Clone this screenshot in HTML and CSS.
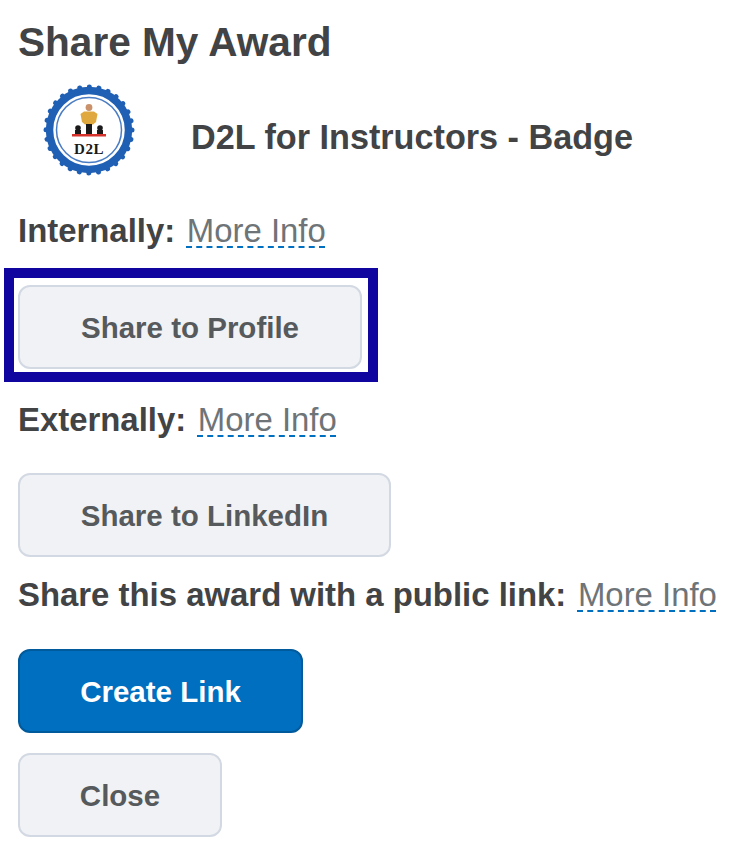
FILE: index.html
```html
<!DOCTYPE html>
<html lang="en">
<head>
<meta charset="utf-8">
<title>Share My Award</title>
<link rel="stylesheet" href="styles.css">
</head>
<body>
<main class="page">
  <h1 class="title">Share My Award</h1>
  <div class="award">
    <svg class="badge" viewBox="0 0 96 96" width="96" height="96" aria-hidden="true">
      <circle cx="48" cy="48" r="43" fill="none" stroke="#1f5fb4" stroke-width="5" stroke-linecap="round" stroke-dasharray="0.01 9.640"/>
      <circle cx="48" cy="48" r="39.500" fill="none" stroke="#1f5fb4" stroke-width="7.500"/>
      <circle cx="48" cy="48" r="32.500" fill="none" stroke="#4a7cc4" stroke-width="1.500"/>
      <circle cx="48" cy="25.500" r="3.400" fill="#c9926a"/>
      <path d="M43 29.500h10l3.500 2.500-1.500 8-3 2.500h-8l-3-2.500-1.500-8z" fill="#e0a93f"/>
      <rect x="45" y="42" width="6" height="10.500" fill="#1a1a1a"/>
      <circle cx="37" cy="46" r="2.800" fill="#1a1a1a"/>
      <circle cx="59" cy="46" r="2.800" fill="#1a1a1a"/>
      <rect x="34" y="48" width="6" height="4.500" fill="#1a1a1a"/>
      <rect x="56" y="48" width="6" height="4.500" fill="#1a1a1a"/>
      <rect x="31" y="52" width="34" height="2.500" fill="#d6322c"/>
      <text x="48" y="72" class="badge-text" text-anchor="middle">D2L</text>
    </svg>
    <h2 class="award-name">D2L for Instructors - Badge</h2>
  </div>

  <p class="label"><strong>Internally:</strong> <a class="info" href="#">More Info</a></p>
  <div class="highlight">
    <button class="btn btn-wide" type="button">Share to Profile</button>
  </div>

  <p class="label label-ext"><strong>Externally:</strong> <a class="info" href="#">More Info</a></p>
  <button class="btn btn-linkedin" type="button">Share to LinkedIn</button>

  <p class="label label-public"><strong>Share this award with a public link:</strong> <a class="info" href="#">More Info</a></p>
  <button class="btn btn-primary" type="button">Create Link</button>
  <button class="btn btn-close" type="button">Close</button>
</main>
</body>
</html>
```

FILE: styles.css
```css
html, body {
  margin: 0;
  padding: 0;
  background: #fff;
}
body {
  font-family: "Liberation Sans", Arial, sans-serif;
  color: #424344;
}
.page {
  width: 732px;
  height: 842px;
  box-sizing: border-box;
  padding: 19px 0 0 18px;
  overflow: hidden;
}
.title {
  margin: 0;
  font-size: 40.6px;
  line-height: 46px;
  font-weight: 700;
}
.award {
  display: flex;
  align-items: center;
  margin-top: 17px;
  height: 96px;
}
.badge {
  margin-left: 23px;
  flex: none;
}
.badge-text {
  font-family: "Liberation Serif", serif;
  font-size: 15px;
  font-weight: 700;
  letter-spacing: 0.5px;
  fill: #1a1a1a;
}
.award-name {
  margin: 14px 0 0 54px;
  font-size: 34.2px;
  line-height: 36px;
  font-weight: 700;
}
.label {
  margin: 33px 0 0;
  font-size: 32.9px;
  line-height: 40px;
}
.label strong { font-weight: 700; }
.info {
  margin-left: 2.5px;
  color: #6e7477;
  text-decoration: underline dashed #006fbf 2px;
  text-underline-offset: 4px;
  text-decoration-skip-ink: none;
}
.highlight {
  box-sizing: border-box;
  width: 374px;
  height: 114px;
  margin: 17px 0 0 -14px;
  padding: 7px 0 0 4px;
  border: 10px solid #10069f;
}
.btn {
  display: block;
  box-sizing: border-box;
  height: 84px;
  padding: 1px 0 0;
  border: 2px solid #d3d9e3;
  border-radius: 12px;
  background: #f1f2f5;
  color: #565a5c;
  font-family: inherit;
  font-size: 29.5px;
  font-weight: 700;
  text-align: center;
}
.btn-wide { width: 344px; }
.label-ext { margin-top: 18px; }
.btn-linkedin { width: 373px; margin-top: 33px; }
.label-public { margin-top: 18px; }
.btn-primary {
  width: 285px;
  margin-top: 34px;
  background: #006fbf;
  border-color: #005a9c;
  color: #fff;
}
.btn-close { width: 204px; margin-top: 20px; }
```
